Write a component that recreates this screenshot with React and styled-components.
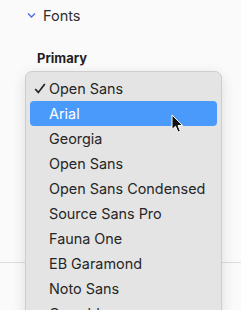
import React from 'react';
import styled, { createGlobalStyle } from 'styled-components';

const fonts = [
  'Open Sans',
  'Arial',
  'Georgia',
  'Open Sans',
  'Open Sans Condensed',
  'Source Sans Pro',
  'Fauna One',
  'EB Garamond',
  'Noto Sans',
  'Oswald',
];

const Global = createGlobalStyle`
  html, body {
    margin: 0;
    background: #ffffff;
    font-family: Inter, "Liberation Sans", sans-serif;
  }
`;

const Page = styled.div`
  position: relative;
  display: flex;
  flex-direction: column;
  width: 241px;
  height: 310px;
  overflow: hidden;
  background: #fafafa;
`;

const SectionHead = styled.div`
  display: flex;
  align-items: center;
  gap: 7px;
  padding: 6px 0 0 27px;
  height: 18px;
  font-size: 14.5px;
  color: #2e2e2e;
`;

const Label = styled.div`
  margin: 26px 0 0 37px;
  font-size: 13px;
  font-weight: 700;
  color: #1f1f1f;
`;

const Divider = styled.div`
  margin-top: 196px;
  height: 1px;
  background: #dcdcdc;
`;

const Menu = styled.div`
  position: absolute;
  top: 71px;
  left: 25px;
  display: flex;
  flex-direction: column;
  width: 187px;
  height: 260px;
  padding: 4px;
  background: #e4e4e4;
  border: 1px solid #cdcdcd;
  border-radius: 7px;
  box-shadow: 0 4px 14px rgba(0, 0, 0, 0.12);
`;

const Item = styled.div`
  display: flex;
  align-items: center;
  flex: none;
  height: 25px;
  padding-left: 4px;
  border-radius: 4px;
  font-size: 14.4px;
  color: ${p => (p.active ? '#ffffff' : '#262626')};
  background: ${p => (p.active ? '#4a9afb' : 'transparent')};
`;

const CheckSlot = styled.span`
  display: flex;
  align-items: center;
  width: 15px;
  flex: none;
`;

const Cursor = styled.svg`
  position: absolute;
  left: 171px;
  top: 114px;
`;

const App = () => (
  <Page>
    <Global />
    <SectionHead>
      <svg width="9" height="7" viewBox="0 0 9 7">
        <path d="M1 1.5 L4.5 5 L8 1.5" fill="none" stroke="#4d6bf0" strokeWidth="1.4" />
      </svg>
      Fonts
    </SectionHead>
    <Label>Primary</Label>
    <Divider />
    <Menu>
      {fonts.map((f, i) => (
        <Item key={i} active={i === 1}>
          <CheckSlot>
            {i === 0 && (
              <svg width="12" height="11" viewBox="0 0 12 11">
                <path d="M1.2 6 L4.3 9.4 L10.8 1" fill="none" stroke="#222" strokeWidth="1.7" />
              </svg>
            )}
          </CheckSlot>
          {f}
        </Item>
      ))}
    </Menu>
    <Cursor width="13" height="20" viewBox="0 0 13 20">
      <path d="M1 1 L1 15.5 L4.5 12.3 L7 18.2 L9.4 17.2 L7 11.5 L11.6 11.5 Z" fill="#111" stroke="#fff" strokeWidth="1" />
    </Cursor>
  </Page>
);

export default App;
